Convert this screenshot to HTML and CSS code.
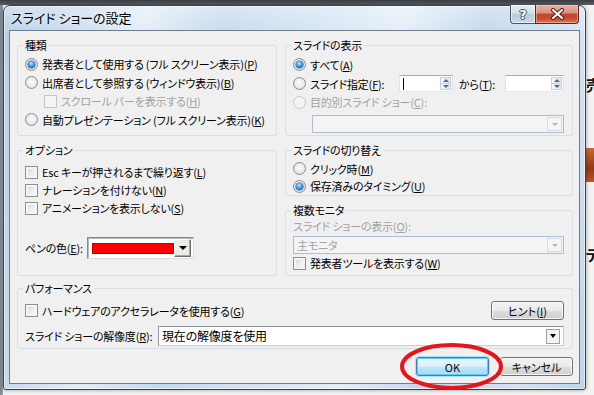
FILE: index.html
```html
<!DOCTYPE html>
<html lang="ja">
<head>
<meta charset="utf-8">
<title>スライド ショーの設定</title>
<link rel="stylesheet" href="styles.css">
</head>
<body>
<div class="desktop">
  <span class="bg-glyph bg-uri">売</span>
  <div class="bg-orange"></div>
  <span class="bg-glyph bg-te">テ</span>

  <div class="window">
    <div class="titlebar">
      <span class="title">スライド ショーの設定</span>
      <div class="caption-buttons">
        <span class="cap help"><span class="help-glyph">?</span></span>
        <span class="cap close">
          <svg width="15" height="12" viewBox="0 0 15 12"><path d="M3 2 L12 10 M12 2 L3 10" stroke="#4a2018" stroke-width="4" stroke-linecap="round"/><path d="M3 2 L12 10 M12 2 L3 10" stroke="#fff" stroke-width="2" stroke-linecap="round"/></svg>
        </span>
      </div>
    </div>

    <div class="client">
      <div class="grid">
        <fieldset class="group type">
          <legend>種類</legend>
          <div class="row r-type"><span class="radio on"></span><span>発表者として使用する (フル スクリーン表示)(<u>P</u>)</span></div>
          <div class="row r-type"><span class="radio"></span><span>出席者として参照する (ウィンドウ表示)(<u>B</u>)</span></div>
          <div class="row r-type disabled indent"><span class="check"></span><span>スクロール バーを表示する(<u>H</u>)</span></div>
          <div class="row r-type"><span class="radio"></span><span>自動プレゼンテーション (フル スクリーン表示)(<u>K</u>)</span></div>
        </fieldset>

        <fieldset class="group show">
          <legend>スライドの表示</legend>
          <div class="row r-show"><span class="radio on"></span><span>すべて(<u>A</u>)</span></div>
          <div class="row r-show">
            <span class="radio"></span><span class="range-label">スライド指定(<u>F</u>):</span>
            <span class="spin from"><span class="spin-text"><span class="caret"></span></span><span class="spin-btns"><span class="spin-up"></span><span class="spin-down"></span></span></span>
            <span class="to-label">から(<u>T</u>):</span>
            <span class="spin to"><span class="spin-text"></span><span class="spin-btns"><span class="spin-up"></span><span class="spin-down"></span></span></span>
          </div>
          <div class="row r-custom disabled"><span class="radio"></span><span>目的別スライド ショー(<u>C</u>):</span></div>
          <div class="combo disabled custom-combo"><span class="combo-text"></span><span class="combo-btn"></span></div>
        </fieldset>

        <fieldset class="group options">
          <legend>オプション</legend>
          <div class="row r-opt"><span class="check"></span><span>Esc キーが押されるまで繰り返す(<u>L</u>)</span></div>
          <div class="row r-opt"><span class="check"></span><span>ナレーションを付けない(<u>N</u>)</span></div>
          <div class="row r-opt"><span class="check"></span><span>アニメーションを表示しない(<u>S</u>)</span></div>
          <div class="row pen-row">
            <span class="pen-label">ペンの色(<u>E</u>):</span>
            <span class="color-combo"><span class="swatch"></span><span class="classic-btn"></span></span>
          </div>
        </fieldset>

        <div class="stack">
          <fieldset class="group switch">
            <legend>スライドの切り替え</legend>
            <div class="row r-switch"><span class="radio"></span><span>クリック時(<u>M</u>)</span></div>
            <div class="row r-switch"><span class="radio on"></span><span>保存済みのタイミング(<u>U</u>)</span></div>
          </fieldset>
          <fieldset class="group monitors">
            <legend>複数モニタ</legend>
            <div class="row r-mon disabled"><span>スライド ショーの表示(<u>O</u>):</span></div>
            <div class="combo disabled monitor-combo"><span class="combo-text">主モニタ</span><span class="combo-btn"></span></div>
            <div class="row r-mon"><span class="check"></span><span>発表者ツールを表示する(<u>W</u>)</span></div>
          </fieldset>
        </div>
      </div>

      <fieldset class="group perf">
        <legend>パフォーマンス</legend>
        <div class="row perf-row">
          <span class="check"></span><span>ハードウェアのアクセラレータを使用する(<u>G</u>)</span>
          <button class="btn hint">ヒント(<u>I</u>)</button>
        </div>
        <div class="row res-row">
          <span class="res-label">スライド ショーの解像度(<u>R</u>):</span>
          <span class="res-combo"><span class="res-text">現在の解像度を使用</span><span class="small-btn"></span></span>
        </div>
      </fieldset>

      <div class="dialog-buttons">
        <button class="btn default">OK</button>
        <button class="btn">キャンセル</button>
      </div>
    </div>
  </div>

  <svg class="annotation" width="108" height="52" viewBox="0 0 108 52"><ellipse cx="53.5" cy="25.5" rx="49.5" ry="21.5" fill="none" stroke="#e3161c" stroke-width="4"/></svg>
</div>
</body>
</html>
```

FILE: styles.css
```css
* { box-sizing: border-box; }
html, body { margin: 0; padding: 0; }
body {
  width: 594px;
  height: 395px;
  overflow: hidden;
  font-family: "Noto Sans CJK JP", "Noto Sans", sans-serif;
  font-size: 11px;
  letter-spacing: -0.2px;
  font-feature-settings: "palt";
  color: #000;
  background:
    linear-gradient(to bottom, #3a3d42 0, #5b6068 5px, transparent 5px),
    linear-gradient(to right, #7d858e 0, #9aa2aa 3px, transparent 3px),
    #f3f3f3;
}
.desktop { position: relative; width: 594px; height: 395px; }

.bg-glyph { position: absolute; font-weight: bold; font-size: 15px; line-height: 15px; color: #111; letter-spacing: 0; }
.bg-uri { left: 586px; top: 77px; }
.bg-te { left: 586px; top: 247px; }
.bg-orange { position: absolute; left: 582px; top: 148px; width: 12px; height: 34px; background: linear-gradient(#c86a36, #8e3b17 60%, #b9572a); }

/* ---------- window frame ---------- */
.window {
  position: absolute;
  left: 3px;
  top: 5px;
  width: 583px;
  height: 385px;
  border: 1px solid #34414f;
  border-radius: 7px 7px 3px 3px;
  padding: 0 5px 5px;
  display: flex;
  flex-direction: column;
  background:
    linear-gradient(to bottom, rgba(255,255,255,.35), rgba(255,255,255,0) 30px),
    linear-gradient(100deg, #b6cee6 0%, #cadced 12%, #e3edf7 22%, #c5d9ed 34%, #d7e6f4 52%, #e4eef8 62%, #c2d7ec 75%, #d3e3f2 90%, #bfd4ea 100%);
  box-shadow: inset 0 0 0 1px rgba(255,255,255,.55), 0 0 4px rgba(0,0,0,.35);
}
.titlebar {
  height: 24px;
  flex: none;
  display: flex;
  justify-content: space-between;
  align-items: flex-start;
}
.title {
  margin: 4px 0 0 2px;
  font-size: 13px;
  letter-spacing: 0;
  line-height: 16px;
  color: #000;
  text-shadow: 0 0 6px rgba(255,255,255,.9);
}
.caption-buttons { display: flex; margin: -1px 1px 0 0; }
.cap {
  height: 19px;
  display: flex;
  align-items: center;
  justify-content: center;
  border: 1px solid #47566a;
  border-top: none;
}
.help {
  width: 25px;
  border-right: none;
  border-radius: 0 0 0 4px;
  background: linear-gradient(#e6eef7 0, #cfdcea 50%, #b9cade 51%, #c9d8e8 100%);
  box-shadow: inset 0 0 0 1px rgba(255,255,255,.6);
}
.help-glyph {
  font-family: "DejaVu Sans", sans-serif;
  font-weight: bold;
  font-size: 13px;
  line-height: 13px;
  color: #fff;
  text-shadow: 1px 0 0 #3f4c5c, -1px 0 0 #3f4c5c, 0 1px 0 #3f4c5c, 0 -1px 0 #3f4c5c;
}
.close {
  width: 44px;
  border-color: #5d261c;
  border-radius: 0 0 4px 0;
  background: linear-gradient(#eab1a4 0, #d9907e 45%, #c2442c 50%, #c84a30 75%, #e07a5a 100%);
  box-shadow: inset 0 0 0 1px rgba(255,220,210,.45);
}

/* ---------- client area ---------- */
.client {
  flex: 1;
  border: 1px solid #6e7d8d;
  background: #f0f0f0;
  padding: 7px 6px 0 7px;
  display: flex;
  flex-direction: column;
}
.grid {
  display: grid;
  grid-template-columns: 260px 288px;
  column-gap: 8px;
  row-gap: 7px;
}
.stack { display: flex; flex-direction: column; gap: 7px; }

.group {
  margin: 0;
  min-width: 0;
  border: 1px solid #d5dfe5;
  border-radius: 3px;
  padding: 0 8px 0 7px;
}
.group legend {
  padding: 0 2px;
  margin-left: -2px;
  line-height: 14px;
  height: 14px;
}

.row { display: flex; align-items: center; white-space: nowrap; }
.row span { line-height: 14px; }
u { text-decoration-thickness: 1px; text-underline-offset: 1px; }
.disabled { color: #a2a2a2; }

/* radios & checks */
.radio {
  flex: none;
  width: 13px;
  height: 13px;
  margin-right: 4px;
  border-radius: 50%;
  border: 1px solid #8b8e91;
  background: radial-gradient(circle at 50% 45%, #fbfbfb 0, #eceff2 45%, #d0d4d8 100%);
  position: relative;
}
.radio.on::after {
  content: "";
  position: absolute;
  left: 2px;
  top: 2px;
  width: 7px;
  height: 7px;
  border-radius: 50%;
  background: radial-gradient(circle at 45% 35%, #c9ecff 0, #55aeea 35%, #1c64b4 75%, #0f4b8c 100%);
  box-shadow: 0 0 0 0.5px #1a4f86;
}
.disabled .radio { border-color: #c5c7c9; background: #f4f4f4; }
.check {
  flex: none;
  width: 13px;
  height: 13px;
  margin-right: 4px;
  border: 1px solid #8e8f8f;
  background: linear-gradient(135deg, #cfd2d6 0, #eceef0 55%, #fbfbfb 100%);
  box-shadow: inset 0 0 0 2px #f4f4f4;
}
.disabled .check { border-color: #c4c4c4; background: #f4f4f4; box-shadow: none; }

/* type group */
.type { padding-top: 3px; padding-bottom: 6px; }
.r-type { height: 18.5px; }
.indent { padding-left: 19px; }

/* show group */
.show { padding-top: 3px; padding-bottom: 2px; }
.r-show { height: 19px; }
.r-custom { height: 18px; }
.range-label { width: 89px; }
.to-label { width: 46px; margin-left: 6px; }
.spin {
  height: 17px;
  display: flex;
  background: #fff;
  border: 1px solid #abadb3;
  border-left-color: #e2e3ea;
  border-right-color: #dbdfe6;
  border-bottom-color: #e3e9ef;
}
.spin.from { width: 54px; }
.spin.to { width: 59px; }
.spin-text { flex: 1; display: flex; align-items: center; padding-left: 3px; }
.caret { width: 1px; height: 12px; background: #000; }
.spin-btns {
  width: 11px;
  margin: 1px 1px 1px 0;
  display: flex;
  flex-direction: column;
  border: 1px solid #c6d1de;
  background: linear-gradient(to right, #f4f7fa, #dfe7f0);
}
.spin-up, .spin-down { flex: 1; display: flex; align-items: center; justify-content: center; }
.spin-up { border-bottom: 1px solid #c6d1de; }
.spin-up::after { content: ""; border: 3px solid transparent; border-top: none; border-bottom: 3px solid #52678a; }
.spin-down::after { content: ""; border: 3px solid transparent; border-bottom: none; border-top: 3px solid #52678a; }

.combo {
  height: 18px;
  display: flex;
  border: 1px solid #aebdd0;
  background: #f4f4f4;
  color: #a2a2a2;
}
.custom-combo { margin: 4px 0 0 19px; }
.combo-text { flex: 1; line-height: 16px; padding-left: 3px; }
.combo-btn {
  width: 15px;
  margin: 1px;
  border: 1px solid #d4dae1;
  background: #f6f6f6;
  display: flex;
  align-items: center;
  justify-content: center;
}
.combo-btn::after { content: ""; border: 3px solid transparent; border-bottom: none; border-top: 3px solid #b4b9bf; }

/* options */
.options { padding-top: 6px; }
.r-opt { height: 18px; }
.pen-row { margin-top: 20px; }
.pen-label { width: 62px; }
.color-combo {
  width: 107px;
  height: 22px;
  display: flex;
  align-items: center;
  padding: 2px;
  background: #fff;
  border: 1px solid;
  border-color: #8a8a8a #dcdcdc #dcdcdc #8a8a8a;
  box-shadow: inset 1px 1px 0 #b8b8b8;
}
.swatch { width: 83px; height: 11px; margin-left: 2px; background: #ff0000; border: 1px solid #c00000; }
.classic-btn {
  margin-left: auto;
  width: 17px;
  height: 18px;
  background: #ecebe6;
  border: 1px solid;
  border-color: #fff #6d6d6d #6d6d6d #fff;
  box-shadow: inset -1px -1px 0 #a8a8a8;
  display: flex;
  align-items: center;
  justify-content: center;
}
.classic-btn::after { content: ""; border: 4px solid transparent; border-bottom: none; border-top: 4px solid #000; }

/* switch */
.switch { padding-top: 3px; padding-bottom: 0; }
.r-switch { height: 17.5px; }

/* monitors */
.monitors { padding-bottom: 3px; flex: 1; }
.r-mon { height: 18px; }
.monitor-combo { margin-top: 1px; }

/* performance */
.perf { margin-top: 5px; padding-top: 6px; padding-bottom: 2px; }
.perf-row { height: 19px; }
.res-row { height: 20px; margin-top: 6px; }
.res-label { width: 133px; }
.res-combo {
  flex: 1;
  height: 20px;
  display: flex;
  align-items: center;
  background: #fff;
  border: 1px solid #8f949a;
  border-right-color: #c8ccd0;
  border-bottom-color: #c8ccd0;
}
.res-text { flex: 1; padding-left: 3px; font-size: 12px; }
.small-btn {
  width: 14px;
  height: 15px;
  margin-right: 3px;
  border: 1px solid #9aa0a6;
  background: #f4f4f4;
  display: flex;
  align-items: center;
  justify-content: center;
}
.small-btn::after { content: ""; border: 3.5px solid transparent; border-bottom: none; border-top: 4px solid #000; }

/* buttons */
.btn {
  font: inherit;
  color: #000;
  width: 73px;
  height: 19px;
  padding: 0;
  line-height: 14px;
  border: 1px solid #707070;
  border-radius: 3px;
  background: linear-gradient(#f2f2f2 0, #ebebeb 50%, #dddddd 50%, #cfcfcf 100%);
  box-shadow: inset 0 0 0 1px rgba(255,255,255,.75);
}
.hint { margin-left: auto; }
.dialog-buttons {
  margin-top: 8px;
  display: flex;
  justify-content: flex-end;
  gap: 11px;
}
.btn.default {
  border-color: #3c7fb1;
  background: linear-gradient(#eaf6fd 0, #d9f0fc 50%, #bee6fd 50%, #a7d9f5 100%);
  box-shadow: inset 0 0 0 1px #5fd0f5, 0 0 0 1px rgba(110,200,240,.45);
}

.annotation { position: absolute; left: 398px; top: 341px; }
```
